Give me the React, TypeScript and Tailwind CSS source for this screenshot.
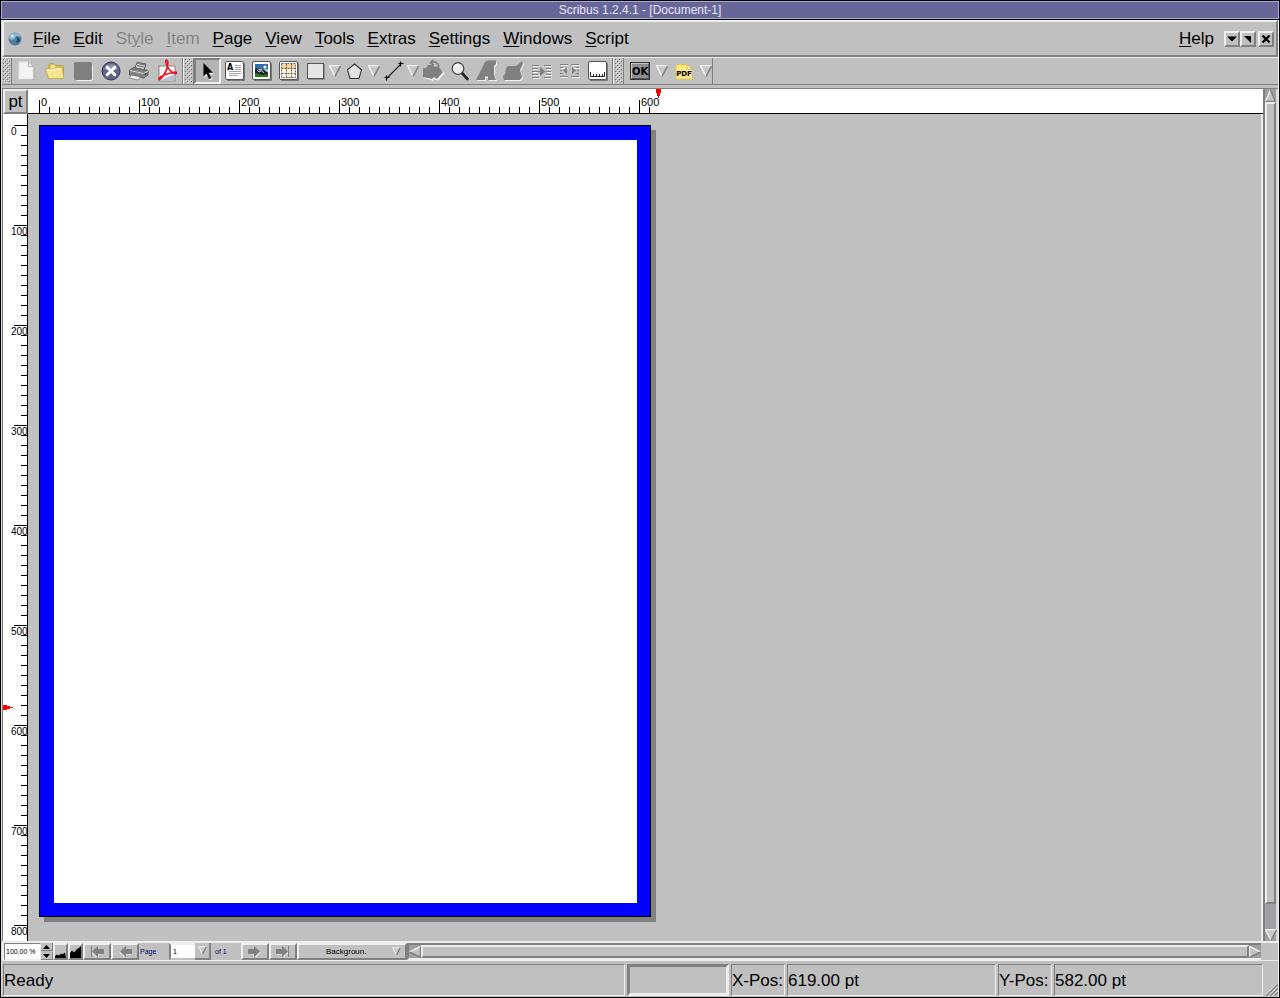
import React, { useState } from 'react';

const RAISED = 'border-2 border-t-[#eeeeee] border-l-[#eeeeee] border-b-[#808080] border-r-[#808080] bg-[#c0c0c0]';
const SUNKEN = 'border border-t-[#808080] border-l-[#808080] border-b-[#eeeeee] border-r-[#eeeeee]';

const PAGE_WIDTH = 612;
const PAGE_HEIGHT = 792;

interface MenuEntry {
  label: string;
  disabled?: boolean;
  hotkey?: number;
}

const MENUS: MenuEntry[] = [
  { label: 'File' },
  { label: 'Edit' },
  { label: 'Style', disabled: true, hotkey: 2 },
  { label: 'Item', disabled: true },
  { label: 'Page' },
  { label: 'View' },
  { label: 'Tools' },
  { label: 'Extras' },
  { label: 'Settings' },
  { label: 'Windows' },
  { label: 'Script' },
];

const MenuLabel: React.FC<MenuEntry> = ({ label, disabled, hotkey = 0 }) => (
  <button type="button" disabled={disabled} className={disabled ? 'text-[#858585]' : 'text-black'}>
    {label.slice(0, hotkey)}
    <span className="underline decoration-1 underline-offset-2">{label[hotkey]}</span>
    {label.slice(hotkey + 1)}
  </button>
);

/* ---------- toolbar pieces ---------- */

const Handle = () => (
  <div className="flex w-2.5 items-center border-r border-[#808080]">
    <svg width="8" height="24" viewBox="0 0 8 24">
      {Array.from({ length: 12 }, (_, row) =>
        [0, 1].map((col) => (
          <g key={`${row}-${col}`}>
            <rect x={1 + col * 4 + (row % 2) * 2} y={row * 2} width="1" height="1" fill="#707070" />
            <rect x={2 + col * 4 + (row % 2) * 2} y={row * 2 + 1} width="1" height="1" fill="#e4e4e4" />
          </g>
        ))
      )}
    </svg>
  </div>
);

const DropArrow: React.FC<{ label: string }> = ({ label }) => (
  <button type="button" aria-label={label} className="flex w-3 items-center justify-center">
    <Triangle />
  </button>
);

const Triangle = () => (
  <svg width="12" height="12" viewBox="0 0 12 12" className="shrink-0">
    <path d="M0.5 0.5H11.5L6 11.5Z" fill="#c8c8c8" />
    <path d="M6 11.5L0.5 0.5H11.5" fill="none" stroke="#eeeeee" strokeWidth="1.5" />
    <path d="M11.5 1L6 11.5" stroke="#808080" strokeWidth="1.6" />
  </svg>
);

const SmallTriangle = () => (
  <svg width="9" height="9" viewBox="0 0 12 12" className="shrink-0">
    <path d="M1 1H11L6 11Z" fill="#c8c8c8" stroke="#eeeeee" strokeWidth="1.4" />
    <path d="M11 1L6 11" stroke="#808080" strokeWidth="2" />
  </svg>
);

const Icon: React.FC<{ children: React.ReactNode; wide?: boolean }> = ({ children, wide }) => (
  <svg width={wide ? 24 : 20} height={wide ? 24 : 20} viewBox={wide ? '0 0 24 24' : '0 0 20 20'} className="shrink-0">
    {children}
  </svg>
);

const Frame = () => (
  <>
    <rect x="2" y="2" width="18" height="18" rx="1" fill="#777777" />
    <rect x="0.5" y="0.5" width="18" height="18" rx="1.5" fill="#ffffff" stroke="#555555" />
  </>
);

const NewIcon = () => (
  <Icon>
    <path d="M3 2H12.5L17.5 7V19H3Z" fill="#999999" opacity="0.6" />
    <path d="M2 1H11.5L16 5.5V18H2Z" fill="#f2f2f2" stroke="#e4e4e4" />
    <path d="M11.5 1V5.5H16Z" fill="#ffffff" stroke="#a5a5a5" strokeWidth="0.8" />
  </Icon>
);

const OpenIcon = () => (
  <Icon>
    <path d="M4 17V3.5Q4 2.5 5 2.5H9L10.5 4.5H17.5Q18.5 4.5 18.5 5.5V17Z" fill="#d8bd58" stroke="#b59b3c" strokeWidth="0.8" />
    <path d="M6 4H9.5L11 6H16V9H6Z" fill="#f3e49a" />
    <path d="M0.5 8H8L9.5 6.5H17L19 17.5H3.5Z" fill="#f5e48e" stroke="#c4a944" strokeWidth="0.8" />
    <path d="M2 9H9L10 7.8H16" fill="none" stroke="#fffbd5" />
  </Icon>
);

const SaveIcon = () => (
  <Icon>
    <path d="M3 2H18L20 4V18Q20 20 18 20H4L2 18Z" fill="#eeeeee" />
    <rect x="1" y="1" width="18" height="18" rx="1.5" fill="#808080" />
  </Icon>
);

const CloseIcon = () => (
  <Icon>
    <circle cx="10" cy="10" r="9" fill="#5e6288" stroke="#353955" />
    <path d="M3 8A7.5 7.5 0 0 1 17 8Q10 11 3 8Z" fill="#8c90b0" />
    <path d="M6.2 6.2L13.8 13.8M13.8 6.2L6.2 13.8" stroke="#ffffff" strokeWidth="3" strokeLinecap="round" />
  </Icon>
);

const PrintIcon = () => (
  <Icon>
    <path d="M6 7L8 1.5L17 3L15 9Z" fill="#d8d8d8" stroke="#555555" />
    <path d="M0.5 9L5 6.5L19 9.5V14L14.5 17L0.5 14Z" fill="#808080" stroke="#5c5c5c" />
    <path d="M1 9.5L14.5 12.5L19 10" fill="none" stroke="#d8d8d8" />
    <path d="M2 14L11.5 16L9 19L0.5 17Z" fill="#f5f5f5" stroke="#777777" strokeWidth="0.8" />
    <path d="M8.5 2.5L16 4M8 4.5L15 6" stroke="#666666" />
    <circle cx="16.5" cy="13" r="1" fill="#444444" />
  </Icon>
);

const PdfExportIcon = () => (
  <Icon wide>
    <rect x="4" y="7" width="16" height="15" fill="#f7f7f7" stroke="#888888" />
    <path d="M5 21.5L19.5 15V21.5Z" fill="#b8c2d4" />
    <path d="M11.5 1Q13.5 1 12.5 7Q11 14 6.5 19Q3.5 22 4 19.5Q6.5 15.5 20.5 13Q22.5 14 20.5 14.8Q14 12.5 11.2 5Q10.2 1.5 11.5 1Z" fill="none" stroke="#ee1122" strokeWidth="1.6" strokeLinejoin="round" />
  </Icon>
);

const PointerIcon = () => (
  <Icon>
    <path d="M6.5 3.5V17L9.5 14L12 19.5L14 18.5L11.8 13.2H16Z" fill="#eeeeee" />
    <path d="M5.5 2V15.5L8.6 12.6L11 18L13.2 17L10.8 11.8H15Z" fill="#000000" />
  </Icon>
);

const TextFrameIcon = () => (
  <Icon>
    <Frame />
    <text x="2" y="9" className="font-['DejaVu_Sans'] text-[8px] font-bold">A</text>
    <path d="M10 4.5H16M10 6.5H16M10 8.5H16M4 10.5H16M4 12.5H16M4 14.5H13" stroke="#999999" strokeWidth="0.9" />
  </Icon>
);

const ImageFrameIcon = () => (
  <Icon>
    <Frame />
    <rect x="3" y="3" width="13" height="6" fill="#2e6fae" />
    <rect x="3" y="8" width="13" height="3" fill="#9cc8e4" />
    <circle cx="13" cy="6" r="1.6" fill="#fff7cc" />
    <rect x="3" y="11" width="13" height="5" fill="#247a1e" />
    <path d="M3 8L5 7L8 10L11 8L16 12V13L10 14L3 12Z" fill="#222222" />
    <path d="M5 9L7 11L10 9.5L12 12" fill="none" stroke="#cccccc" />
  </Icon>
);

const TableIcon = () => (
  <Icon>
    <Frame />
    <rect x="3" y="3" width="13" height="13" fill="#fdf1dc" />
    <rect x="3" y="3" width="13" height="4" fill="#f8d09c" />
    <path d="M2.5 2.5H16.5V16.5H2.5ZM2.5 7.5H16.5M2.5 12.5H16.5M7.5 2.5V16.5M12.5 2.5V16.5" fill="none" stroke="#555555" strokeWidth="0.9" strokeDasharray="2 1" />
  </Icon>
);

const ShapeIcon = () => (
  <Icon>
    <rect x="2" y="3" width="17" height="16" fill="#909090" />
    <rect x="1.5" y="2.5" width="16" height="15" fill="#e6e6e6" stroke="#555555" />
  </Icon>
);

const PolygonIcon = () => (
  <Icon>
    <path d="M9.5 3L16.5 8.8L14 17.5H5L2.5 8.8Z" fill="#e2e2e2" stroke="#333333" strokeWidth="1.1" />
  </Icon>
);

const LineIcon = () => (
  <Icon>
    <path d="M3 17L17 3" stroke="#222222" strokeWidth="1.2" />
    <path d="M0.5 16.5H5.5M2.5 14.5V19.5M14.5 2.5H19.5M16.5 0.5V5.5" stroke="#000000" strokeWidth="1.2" />
  </Icon>
);

const RotateIcon = () => (
  <Icon wide>
    <path d="M3 10H12L16 7L24 14L17 22L14 20L12 22L3 19Z" fill="#eeeeee" />
    <path d="M2 9H5L7 6H12L14 8L17 7L22 13L16 20L13 18L11 20L2 18Z" fill="#808080" />
    <path d="M10 3.5Q16 1 18 7.5M12 1L9.5 4L13 6" fill="none" stroke="#808080" strokeWidth="1.8" />
  </Icon>
);

const MagnifierIcon = () => (
  <Icon>
    <path d="M12 12L17.5 18" stroke="#222222" strokeWidth="2.6" strokeLinecap="round" />
    <circle cx="8" cy="7.5" r="5.8" fill="#ececec" stroke="#444444" strokeWidth="1.2" />
    <path d="M4.5 7A4 4 0 0 1 8 3.8" fill="none" stroke="#ffffff" strokeWidth="1.4" />
  </Icon>
);

const EditTextIcon = () => (
  <Icon wide>
    <path d="M11 5L13 3H22V6L20 8V17L22 22H14V19H11V22H2L3 19L8 9Z" fill="#eeeeee" />
    <path d="M10 3L12 1.5H21V5L19 7V16L21 21H13V17.5H10V21H1L3 17Z" fill="#808080" />
  </Icon>
);

const StoryEditorIcon = () => (
  <Icon wide>
    <path d="M5 9H15L21 3L22 6L19 12L21 20L19 22H3L2 18Z" fill="#eeeeee" />
    <path d="M4 9L6 7H14L20 2L21 5L18 11L20 18L18 21H2L1 17L3 15Z" fill="#808080" />
  </Icon>
);

const LinkIcon = () => (
  <Icon>
    <path d="M1 5.5H8M1 8.5H6M1 11.5H6M1 14.5H8M1 17.5H8M13 5.5H20M15 8.5H20M15 11.5H20M13 14.5H20M13 17.5H20" stroke="#eeeeee" />
    <path d="M0 4.5H7M0 7.5H6M0 10.5H10M0 13.5H6M0 16.5H7M12 4.5H19M14 7.5H19M14 10.5H19M14 13.5H19M12 16.5H19" stroke="#808080" strokeWidth="1.2" />
    <path d="M8 6L13.5 10.5L8 15Z" fill="#808080" />
  </Icon>
);

const UnlinkIcon = () => (
  <Icon>
    <path d="M1 4.5H8M1 7.5H8M1 16.5H8M12 4.5H20M12 7.5H20M12 16.5H20" stroke="#eeeeee" />
    <path d="M0 3.5H8M0 6.5H3M0 9.5H2M0 12.5H3M0 15.5H8M11 3.5H19M16 6.5H19M17 9.5H19M16 12.5H19M11 15.5H19" stroke="#808080" strokeWidth="1.2" />
    <path d="M3 9.5L7 6V13ZM16 9.5L12 6V13Z" fill="#808080" />
  </Icon>
);

const MeasureIcon = () => (
  <Icon>
    <Frame />
    <path d="M2.5 11V15.5H16.5V11M5.5 13V15M8.5 13V15M11.5 13V15M14.5 13V15" fill="none" stroke="#222222" />
  </Icon>
);

const OkIcon = () => (
  <svg width="20" height="18" viewBox="0 0 20 18">
    <rect x="0.5" y="0.5" width="19" height="17" fill="#8e8e8e" stroke="#333333" />
    <path d="M1.5 16V1.5H18" fill="none" stroke="#c8c8c8" />
    <path d="M2 16.5H18.5V2" fill="none" stroke="#555555" />
    <text x="10" y="13" textAnchor="middle" className="font-['DejaVu_Sans'] text-[10px] font-bold">OK</text>
  </svg>
);

const PdfNoteIcon = () => (
  <svg width="18" height="18" viewBox="0 0 18 18">
    <path d="M1 2.5H12L17 7V17H1Z" fill="#fbe985" stroke="#dcc45c" />
    <path d="M12 2.5V7H17Z" fill="#fff8c8" stroke="#d0b850" strokeWidth="0.8" />
    <text x="9" y="14" textAnchor="middle" className="font-['DejaVu_Sans'] text-[7px] font-bold">PDF</text>
  </svg>
);

interface Tool {
  label: string;
  icon: React.ReactNode;
  menu?: boolean;
}

const FILE_TOOLS: Tool[] = [
  { label: 'New', icon: <NewIcon /> },
  { label: 'Open', icon: <OpenIcon /> },
  { label: 'Save', icon: <SaveIcon /> },
  { label: 'Close', icon: <CloseIcon /> },
  { label: 'Print', icon: <PrintIcon /> },
  { label: 'Save as PDF', icon: <PdfExportIcon /> },
];

const ITEM_TOOLS: Tool[] = [
  { label: 'Select', icon: <PointerIcon /> },
  { label: 'Insert Text Frame', icon: <TextFrameIcon /> },
  { label: 'Insert Picture', icon: <ImageFrameIcon /> },
  { label: 'Insert Table', icon: <TableIcon /> },
  { label: 'Insert Shape', icon: <ShapeIcon />, menu: true },
  { label: 'Insert Polygon', icon: <PolygonIcon />, menu: true },
  { label: 'Insert Line', icon: <LineIcon />, menu: true },
  { label: 'Rotate Item', icon: <RotateIcon /> },
  { label: 'Zoom', icon: <MagnifierIcon /> },
  { label: 'Edit Contents', icon: <EditTextIcon /> },
];

const EDIT_TOOLS: Tool[] = [
  { label: 'Story Editor', icon: <StoryEditorIcon /> },
  { label: 'Link Frames', icon: <LinkIcon /> },
  { label: 'Unlink Frames', icon: <UnlinkIcon /> },
  { label: 'Measurements', icon: <MeasureIcon /> },
];

/* ---------- rulers ---------- */

const HORIZONTAL_TICKS = Array.from({ length: 62 }, (_, i) => i * 10);
const VERTICAL_TICKS = Array.from({ length: 81 }, (_, i) => i * 10);

const HorizontalRuler: React.FC<{ pos: number }> = ({ pos }) => (
  <svg className="block h-[25px] w-full bg-white" shapeRendering="crispEdges">
    <rect x="0" y="24" width="100%" height="1" fill="#000000" />
    {HORIZONTAL_TICKS.map((t) => (
      <rect key={t} x={11 + t} y={t % 100 === 0 ? 11 : 18} width="1" height={t % 100 === 0 ? 13 : 6} />
    ))}
    {HORIZONTAL_TICKS.filter((t) => t % 100 === 0).map((t) => (
      <text key={t} x={13 + t} y="17" className="text-[11px]">{t}</text>
    ))}
    <path d={`M${pos + 9} 0h5v4h-1v3h-1v2h-1v-2h-1v-3h-1z`} fill="#ff0000" />
  </svg>
);

const VerticalRuler: React.FC<{ pos: number }> = ({ pos }) => (
  <svg className="block h-full w-[25px] shrink-0 bg-white" shapeRendering="crispEdges">
    <rect x="24" y="0" width="1" height="100%" fill="#000000" />
    {VERTICAL_TICKS.map((t) => (
      <rect key={t} x={t % 100 === 0 ? 11 : 18} y={11 + t} width={t % 100 === 0 ? 13 : 6} height="1" />
    ))}
    {VERTICAL_TICKS.filter((t) => t % 100 === 0).map((t) => (
      <text key={t} x="8" y={21 + t} className="text-[10px]">{t}</text>
    ))}
    <path d={`M0 ${pos + 9}v5h4v-1h3v-1h3v-1h-3v-1h-3v-1z`} fill="#ff0000" />
  </svg>
);

/* ---------- scroll bars ---------- */

const VerticalScroll = () => (
  <div className="flex w-[15px] shrink-0 flex-col border-x-2 border-l-[#808080] border-r-[#d8d8d8] bg-[#a0a0a4]">
    <button type="button" aria-label="Scroll up" className="flex justify-center">
      <svg width="11" height="13" viewBox="0 0 11 13">
        <path d="M5.5 1L0.5 12.5H10.5Z" fill="#c0c0c0" />
        <path d="M5.5 1L0.5 12.5" stroke="#eeeeee" strokeWidth="1.5" />
        <path d="M5.5 1L10.5 12.5H0.5" fill="none" stroke="#808080" strokeWidth="1.5" />
      </svg>
    </button>
    <div className="min-h-0 flex-1">
      <div className={`h-[97%] ${RAISED}`} />
    </div>
    <button type="button" aria-label="Scroll down" className="flex justify-center">
      <Triangle />
    </button>
  </div>
);

const HorizontalScroll = () => (
  <div className="flex min-w-0 flex-1 items-stretch border-y-2 border-l-2 border-t-[#808080] border-b-[#eeeeee] border-l-[#808080] bg-[#a0a0a4]">
    <button type="button" aria-label="Scroll left" className="flex items-center">
      <svg width="12" height="12" viewBox="0 0 12 12">
        <path d="M0.5 6L11.5 0.5V11.5Z" fill="#c0c0c0" />
        <path d="M0.5 6L11.5 0.5" stroke="#eeeeee" strokeWidth="1.5" />
        <path d="M0.5 6L11.5 11.5V0.5" fill="none" stroke="#808080" strokeWidth="1.5" />
      </svg>
    </button>
    <div className={`flex-1 ${RAISED}`} />
    <button type="button" aria-label="Scroll right" className="flex items-center">
      <svg width="12" height="12" viewBox="0 0 12 12">
        <path d="M11.5 6L0.5 0.5V11.5Z" fill="#c0c0c0" />
        <path d="M11.5 6L0.5 0.5V11.5" fill="none" stroke="#eeeeee" strokeWidth="1.5" />
        <path d="M11.5 6L0.5 11.5" stroke="#808080" strokeWidth="1.5" />
      </svg>
    </button>
  </div>
);

/* ---------- page navigation ---------- */

interface NavButtonProps {
  label: string;
  back?: boolean;
  end?: boolean;
}

const NavButton: React.FC<NavButtonProps> = ({ label, back, end }) => (
  <button type="button" aria-label={label} className={`flex w-7 items-center justify-center ${RAISED}`}>
    <svg width="16" height="12" viewBox="0 0 16 12" className={back ? '-scale-x-100' : ''}>
      <path d="M2 4H8V1L14 6.5L9 12V9H2Z" fill="#d8d8d8" />
      <path d="M1 3H7V0L13 5.5L7 11V8H1Z" fill="#808080" />
      {end && <rect x="13" y="0" width="1" height="11" fill="#808080" />}
    </svg>
  </button>
);

export default function App() {
  const [activeTool, setActiveTool] = useState('Select');
  const [zoom, setZoom] = useState('100.00 %');
  const xPos = 619;
  const yPos = 582;

  const renderTool = (tool: Tool, width: string) => (
    <React.Fragment key={tool.label}>
      <button
        type="button"
        aria-label={tool.label}
        onClick={() => setActiveTool(tool.label)}
        className={`flex items-center justify-center ${width} ${
          activeTool === tool.label
            ? 'border-2 border-t-[#808080] border-l-[#808080] border-b-[#eeeeee] border-r-[#eeeeee] bg-[#b4b4b4]'
            : ''
        }`}
      >
        {tool.icon}
      </button>
      {tool.menu && <DropArrow label={`${tool.label} options`} />}
    </React.Fragment>
  );

  return (
    <div className="flex h-screen flex-col overflow-hidden bg-black p-px font-['Liberation_Sans',Arial,sans-serif] text-[17px] text-black">
      {/* Title bar */}
      <header className="mb-px flex h-[18px] shrink-0 items-center justify-center border border-[#a9a9d3] bg-[#666699]">
        <h1 className="text-[12px] leading-4 text-[#e6e6f5]">Scribus 1.2.4.1 - [Document-1]</h1>
      </header>

      <div className="flex min-h-0 flex-1 flex-col border-x border-l-[#d8d8d8] border-r-[#eeeeee] bg-[#c0c0c0]">
        {/* Menu bar */}
        <nav className={`flex h-[37px] shrink-0 items-center gap-[13px] pl-1 pr-0.5 leading-5 ${RAISED}`}>
          <svg width="14" height="14" viewBox="0 0 14 14" className="-mr-0.5">
            <circle cx="7" cy="7" r="6.5" fill="#4c7ea4" />
            <path d="M1 6Q1 1 7 0.8Q12 1 13 5Q9 3 7 6Q4 10 1 6Z" fill="#8fb8d0" />
            <path d="M8 4Q12 5 12 9Q10 12 8 10Q10 7 8 4Z" fill="#24506f" />
            <circle cx="4.5" cy="4" r="1.5" fill="#d4e8f2" />
          </svg>
          {MENUS.map((menu) => (
            <MenuLabel key={menu.label} {...menu} />
          ))}
          <div className="ml-auto flex items-center gap-2.5">
            <MenuLabel label="Help" />
            <div className="flex items-center">
              <button type="button" aria-label="Minimize" className={`flex size-4 items-center justify-center ${RAISED}`}>
                <svg width="10" height="10" viewBox="0 0 10 10"><path d="M0 2.5H10L5 7.5Z" /></svg>
              </button>
              <button type="button" aria-label="Restore" className={`flex size-4 items-center justify-center ${RAISED}`}>
                <svg width="10" height="10" viewBox="0 0 10 10"><path d="M1 2H8V9Z" /></svg>
              </button>
              <button type="button" aria-label="Close document" className={`ml-0.5 flex size-4 items-center justify-center ${RAISED}`}>
                <svg width="10" height="10" viewBox="0 0 10 10"><path d="M1.5 1.5L8.5 8.5M8.5 1.5L1.5 8.5" stroke="#000000" strokeWidth="2.4" /></svg>
              </button>
            </div>
          </div>
        </nav>

        {/* Tool bars */}
        <div className="h-8 shrink-0 border-b border-[#808080] pb-[3px]">
          <div className="flex h-full border-t border-b border-t-[#eeeeee] border-b-[#808080]">
            <div className="flex border-r border-[#808080] pr-px">
              <Handle />
              <div className="flex pl-px">{FILE_TOOLS.map((tool) => renderTool(tool, 'w-7'))}</div>
            </div>
            <div className="flex border-x border-l-[#eeeeee] border-r-[#808080]">
              <Handle />
              {ITEM_TOOLS.map((tool) => renderTool(tool, 'w-[27px]'))}
              {EDIT_TOOLS.map((tool) => renderTool(tool, 'w-7'))}
            </div>
            <div className="flex border-x border-l-[#eeeeee] border-r-[#808080]">
              <Handle />
              {renderTool({ label: 'Button Field', icon: <OkIcon />, menu: true }, 'w-8')}
              {renderTool({ label: 'Text Annotation', icon: <PdfNoteIcon />, menu: true }, 'w-8')}
            </div>
          </div>
        </div>

        {/* Document window */}
        <div className="flex min-h-0 flex-1 border-l border-[#808080]">
          <div className="flex min-w-0 flex-1 flex-col">
            <div className="flex shrink-0">
              <button type="button" className={`h-[25px] w-[25px] shrink-0 leading-5 ${RAISED}`}>pt</button>
              <div className="min-w-0 flex-1">
                <HorizontalRuler pos={xPos} />
              </div>
            </div>
            <div className="flex min-h-0 flex-1">
              <VerticalRuler pos={yPos} />
              <main className="min-w-0 flex-1 overflow-hidden border-r-2 border-[#eeeeee] pl-[11px] pt-[11px]">
                <div
                  className="border border-black bg-[#0000ff] pb-[13px] pl-[14px] pr-[13px] pt-[14px] shadow-[5px_5px_0_#808080]"
                  style={{ width: PAGE_WIDTH, height: PAGE_HEIGHT }}
                >
                  <div className="h-full bg-white" />
                </div>
              </main>
            </div>
          </div>
          <VerticalScroll />
        </div>

        {/* Zoom and page navigation */}
        <div className="flex h-5 shrink-0 items-stretch border-t-2 border-b border-[#eeeeee] border-l-2 pr-[17px] text-[7px] leading-3">
          <input
            aria-label="Zoom level"
            value={zoom}
            onChange={(e) => setZoom(e.target.value)}
            className="w-[37px] border border-[#808080] border-b-[#eeeeee] border-r-[#eeeeee] bg-white px-px"
          />
          <div className="flex w-3 flex-col justify-center gap-px">
            <button type="button" aria-label="Increase zoom" className="flex h-2 items-center justify-center border-b border-r border-[#808080]">
              <svg width="7" height="4" viewBox="0 0 7 4"><path d="M0 4L3.5 0L7 4Z" /></svg>
            </button>
            <button type="button" aria-label="Decrease zoom" className="flex h-2 items-center justify-center border-b border-r border-[#808080]">
              <svg width="7" height="4" viewBox="0 0 7 4"><path d="M0 0L3.5 4L7 0Z" /></svg>
            </button>
          </div>
          <button type="button" aria-label="Zoom out" className={`flex w-[15px] items-end justify-center ${RAISED}`}>
            <svg width="11" height="12" viewBox="0 0 11 12"><path d="M0 12V10L2 8.5L4 9.5L6 7.5L7 8.5L10 6.5L11 12Z" /></svg>
          </button>
          <button type="button" aria-label="Zoom in" className={`flex w-[15px] items-end justify-center ${RAISED}`}>
            <svg width="11" height="12" viewBox="0 0 11 12"><path d="M0 12V7L2 4.5L4 6.5L7 3L9 2L11 0V12Z" /></svg>
          </button>
          <NavButton label="First page" back end />
          <NavButton label="Previous page" back />
          <label htmlFor="page-number" className="flex w-[30px] items-center pl-px text-[#000066]">Page</label>
          <div className="relative flex w-[42px]">
            <select id="page-number" className="w-full appearance-none border-2 border-l-[#808080] border-t-[#eeeeee] border-r-[#808080] border-b-[#c0c0c0] bg-white px-0.5">
              <option>1</option>
            </select>
            <span className="pointer-events-none absolute inset-y-0 right-0 flex w-4 items-center justify-center border-r-2 border-b-2 border-[#808080] bg-[#c0c0c0]">
              <SmallTriangle />
            </span>
          </div>
          <span className="flex w-[30px] items-center pl-1 text-[#000066]">of 1</span>
          <NavButton label="Next page" />
          <NavButton label="Last page" end />
          <div className="relative flex w-[110px]">
            <select aria-label="Layer" className={`w-full appearance-none pl-[27px] text-[8px] ${RAISED}`}>
              <option>Backgroun.</option>
            </select>
            <span className="pointer-events-none absolute inset-y-0 right-1.5 flex items-center">
              <SmallTriangle />
            </span>
          </div>
          <HorizontalScroll />
        </div>

        {/* Status bar */}
        <footer className="flex h-9 shrink-0 gap-0.5 pl-px pb-px pt-[3px] leading-8">
          <p className={`min-w-0 flex-1 ${SUNKEN}`}>Ready</p>
          <div className="w-[102px] border-3 border-t-[#808080] border-l-[#808080] border-b-[#eeeeee] border-r-[#eeeeee]" />
          <p className={`w-[54px] whitespace-nowrap ${SUNKEN}`}>X-Pos:</p>
          <p className={`w-[209px] ${SUNKEN}`}>{xPos.toFixed(2)} pt</p>
          <p className={`w-[54px] whitespace-nowrap ${SUNKEN}`}>Y-Pos:</p>
          <p className={`w-[209px] ${SUNKEN}`}>{yPos.toFixed(2)} pt</p>
          <div className="flex w-[13px] items-end justify-end">
            <svg width="12" height="12" viewBox="0 0 12 12">
              <path d="M0 12L12 0M4 12L12 4M8 12L12 8" stroke="#808080" strokeWidth="1.6" />
              <path d="M-1.5 12L12 -1.5M2.5 12L12 2.5M6.5 12L12 6.5" stroke="#eeeeee" />
            </svg>
          </div>
        </footer>
      </div>
    </div>
  );
}
